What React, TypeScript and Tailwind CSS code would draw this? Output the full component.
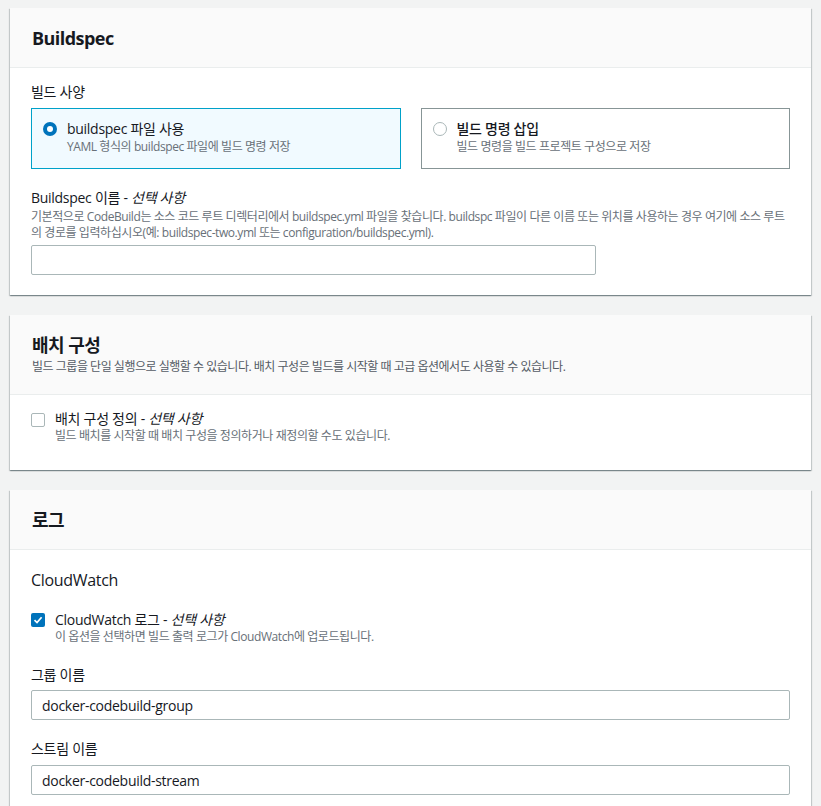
import React from 'react';

const font = { fontFamily: '"Open Sans", "Noto Sans CJK KR", sans-serif' };

function Card({ children }: { children: React.ReactNode }) {
  return (
    <div className="mx-[10px] bg-white shadow-[0_1px_1px_0_rgba(0,28,36,0.3),1px_1px_1px_0_rgba(0,28,36,0.15),-1px_1px_1px_0_rgba(0,28,36,0.15)]">
      {children}
    </div>
  );
}

function CardHeader({ title, desc }: { title: string; desc?: string }) {
  return (
    <div className="border-b border-[#eaeded] bg-[#fafafa] px-[22px] pt-[19px] pb-[18px]">
      <h2 className="text-[18px] font-bold leading-[22px] tracking-[-0.03em] text-[#16191f]">{title}</h2>
      {desc && (
        <p className="mt-[3px] mb-[1px] text-[12px] leading-[16px] tracking-[-0.04em] text-[#545b64]">{desc}</p>
      )}
    </div>
  );
}

function Optional() {
  return <i className="font-normal">선택 사항</i>;
}

function Checkbox({ checked }: { checked?: boolean }) {
  return checked ? (
    <span className="mt-[2px] flex h-[14px] w-[14px] shrink-0 items-center justify-center rounded-[2px] bg-[#0073bb]">
      <svg width="10" height="10" viewBox="0 0 10 10">
        <path d="M1.5 5.2 L4 7.6 L8.6 2.2" fill="none" stroke="white" strokeWidth="1.7" />
      </svg>
    </span>
  ) : (
    <span className="mt-[3px] h-[14px] w-[14px] shrink-0 rounded-[2px] border border-[#aab7b8] bg-white" />
  );
}

const desc = 'text-[12px] leading-[16px] tracking-[-0.035em] text-[#687078]';
const label = 'text-[14px] leading-[20px] tracking-[-0.02em]';

export default function App() {
  return (
    <div className="min-h-[806px] bg-[#f2f3f3] pt-[8px] pb-[20px] text-[#16191f]" style={font}>
      <Card>
        <CardHeader title="Buildspec" />
        <div className="px-[21px] pt-[14px] pb-[20px]">
          <div className={label}>빌드 사양</div>
          <div className="mt-[6px] grid grid-cols-2 gap-[20px]">
            <div className="flex h-[61px] items-start gap-[10px] border border-[#00a1c9] bg-[#f1faff] px-[11px] pt-[10px]">
              <span className="mt-[3px] flex h-[14px] w-[14px] shrink-0 items-center justify-center rounded-full bg-[#0073bb]">
                <span className="h-[6px] w-[6px] rounded-full bg-white" />
              </span>
              <div>
                <div className={label}>buildspec 파일 사용</div>
                <div className={desc}>YAML 형식의 buildspec 파일에 빌드 명령 저장</div>
              </div>
            </div>
            <div className="flex h-[61px] items-start gap-[10px] border border-[#879596] bg-white px-[11px] pt-[10px]">
              <span className="mt-[3px] h-[14px] w-[14px] shrink-0 rounded-full border border-[#aab7b8] bg-white" />
              <div>
                <div className={`${label} font-medium`}>빌드 명령 삽입</div>
                <div className={desc}>빌드 명령을 빌드 프로젝트 구성으로 저장</div>
              </div>
            </div>
          </div>
          <div className={`mt-[19px] ${label}`}>
            Buildspec 이름 - <Optional />
          </div>
          <p className={`mt-[1px] ${desc}`}>
            기본적으로 CodeBuild는 소스 코드 루트 디렉터리에서 buildspec.yml 파일을 찾습니다. buildspc 파일이 다른 이름 또는 위치를 사용하는 경우 여기에 소스 루트의 경로를 입력하십시오(예: buildspec-two.yml 또는 configuration/buildspec.yml).
          </p>
          <div className="mt-[4px] h-[30px] w-[565px] rounded-[2px] border border-[#aab7b8] bg-white" />
        </div>
      </Card>

      <div className="h-[20px]" />

      <Card>
        <CardHeader title="배치 구성" desc="빌드 그룹을 단일 실행으로 실행할 수 있습니다. 배치 구성은 빌드를 시작할 때 고급 옵션에서도 사용할 수 있습니다." />
        <div className="flex gap-[10px] px-[21px] pt-[15px] pb-[26px]">
          <Checkbox />
          <div>
            <div className="text-[14px] leading-[18px] tracking-[-0.02em]">
              배치 구성 정의 - <Optional />
            </div>
            <div className={desc}>빌드 배치를 시작할 때 배치 구성을 정의하거나 재정의할 수도 있습니다.</div>
          </div>
        </div>
      </Card>

      <div className="h-[20px]" />

      <Card>
        <CardHeader title="로그" />
        <div className="px-[21px] pt-[19px] pb-[20px]">
          <div className="text-[16px] leading-[22px] tracking-[-0.02em]">CloudWatch</div>
          <div className="mt-[20px] flex gap-[10px]">
            <Checkbox checked />
            <div>
              <div className="text-[14px] leading-[18px] tracking-[-0.02em]">
                CloudWatch 로그 - <Optional />
              </div>
              <div className={desc}>이 옵션을 선택하면 빌드 출력 로그가 CloudWatch에 업로드됩니다.</div>
            </div>
          </div>
          <div className={`mt-[20px] ${label}`}>그룹 이름</div>
          <div className="mt-[5px] flex h-[30px] items-center rounded-[2px] border border-[#aab7b8] px-[10px] text-[14px] tracking-[-0.02em]">docker-codebuild-group</div>
          <div className={`mt-[19px] ${label}`}>스트림 이름</div>
          <div className="mt-[6px] flex h-[30px] items-center rounded-[2px] border border-[#aab7b8] px-[10px] text-[14px] tracking-[-0.02em]">docker-codebuild-stream</div>
        </div>
      </Card>
    </div>
  );
}
